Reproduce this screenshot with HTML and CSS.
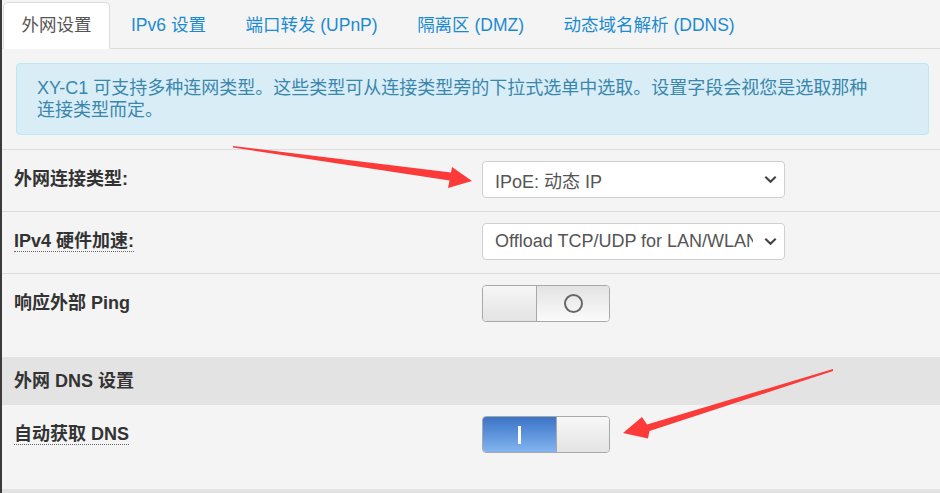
FILE: index.html
```html
<!DOCTYPE html>
<html lang="zh-CN">
<head>
<meta charset="utf-8">
<title>外网设置</title>
<link rel="stylesheet" href="styles.css">
</head>
<body>
<div class="page">
  <ul class="tabs">
    <li class="tab active">外网设置</li>
    <li class="tab">IPv6 设置</li>
    <li class="tab">端口转发 (UPnP)</li>
    <li class="tab">隔离区 (DMZ)</li>
    <li class="tab">动态域名解析 (DDNS)</li>
  </ul>

  <div class="alert">XY-C1 可支持多种连网类型。这些类型可从连接类型旁的下拉式选单中选取。设置字段会视您是选取那种<br>连接类型而定。</div>

  <div class="form">
    <div class="row">
      <div class="label"><span>外网连接类型:</span></div>
      <div class="select">
        <span class="select-text">IPoE: 动态 IP</span>
        <svg class="chev" width="13" height="9" viewBox="0 0 13 9"><path d="M1.3 1.8 L6.5 6.8 L11.7 1.8" fill="none" stroke="#444" stroke-width="2.2"/></svg>
      </div>
    </div>
    <div class="row">
      <div class="label"><span class="dotted">IPv4 硬件加速:</span></div>
      <div class="select">
        <span class="select-text">Offload TCP/UDP for LAN/WLAN</span>
        <svg class="chev" width="13" height="9" viewBox="0 0 13 9"><path d="M1.3 1.8 L6.5 6.8 L11.7 1.8" fill="none" stroke="#444" stroke-width="2.2"/></svg>
      </div>
    </div>
    <div class="row tall">
      <div class="label"><span>响应外部 Ping</span></div>
      <div class="toggle">
        <div class="knob knob-left"></div>
        <div class="track-off"><div class="circle"></div></div>
      </div>
    </div>
    <div class="section">外网 DNS 设置</div>
    <div class="row tall last nobar">
      <div class="label"><span class="dotted">自动获取 DNS</span></div>
      <div class="toggle">
        <div class="track-on"><div class="bar"></div></div>
        <div class="knob knob-right"></div>
      </div>
    </div>
    <div class="section thin"></div>
  </div>

  <svg class="arrows" width="940" height="493" viewBox="0 0 940 493">
    <polygon points="233,146 451,172.5 452,167 472,181 448,188 449.5,180.5 233,147.5" fill="#fc3a3a"/>
    <polygon points="833,369 647,424.5 642,417 623,433 648,438.5 649.5,431 833,371" fill="#fc3a3a"/>
  </svg>
</div>
</body>
</html>
```

FILE: styles.css
```css
* { box-sizing: border-box; }

html, body {
  margin: 0;
  padding: 0;
  height: 493px;
  overflow: hidden;
  background: #f4f4f4;
}

body {
  font-family: "Liberation Sans", "Noto Sans CJK SC", sans-serif;
  font-size: 18px;
  color: #333;
}

.page {
  position: relative;
  height: 493px;
  border-left: 2px solid #3b3b3b;
}

.tabs {
  list-style: none;
  margin: 0;
  padding: 2px 0 0 1px;
  display: flex;
  height: 49px;
  border-bottom: 1px solid #dcdcdc;
  font-size: 17.5px;
}

.tab {
  height: 47px;
  line-height: 45px;
  padding: 0 17.5px;
  margin-right: 2.5px;
  color: #1b8bd0;
  border: 1px solid transparent;
  border-radius: 5px 5px 0 0;
  white-space: nowrap;
}

.tab.active {
  background: #fff;
  color: #555;
  border-color: #dcdcdc;
  border-bottom-color: #fff;
}

.alert {
  margin: 14px 11px 0 14px;
  padding: 13px 20px;
  background: #d9edf7;
  border: 1px solid #bce8f1;
  border-radius: 4px;
  color: #3a87ad;
  line-height: 22px;
  white-space: nowrap;
}

.form {
  margin-top: 14px;
}

.row {
  display: grid;
  grid-template-columns: 468px 303px;
  align-items: start;
  padding: 11px 0 13px 12px;
  border-top: 1px solid #dcdcdc;
  background: #f4f4f4;
}

.row.tall { padding-bottom: 35px; }
.row.last { padding-bottom: 36px; }
.row.nobar { border-top: none; }

.label {
  line-height: 37px;
  font-weight: bold;
  color: #333;
}

.dotted {
  border-bottom: 1px dotted #666;
}

.select {
  height: 37px;
  background: #fff;
  border: 1px solid #cfcfcf;
  border-radius: 4px;
  display: flex;
  align-items: center;
  padding: 0 7px 0 12px;
  color: #555;
  overflow: hidden;
}

.select-text {
  flex: 1;
  white-space: nowrap;
  overflow: hidden;
  margin-right: 11px;
}

.chev { flex: none; }

.toggle {
  width: 128px;
  height: 37px;
  display: flex;
  border: 1px solid #a8a8a8;
  border-radius: 4px;
  overflow: hidden;
}

.knob {
  width: 54px;
  background: linear-gradient(#f7f7f7, #e3e3e3);
}

.knob-left {
  border-right: 1px solid #a8a8a8;
  box-shadow: 1px 0 1px rgba(0,0,0,0.08);
}

.knob-right {
  border-left: 1px solid #a8a8a8;
}

.track-off {
  flex: 1;
  display: flex;
  align-items: center;
  justify-content: center;
  background: linear-gradient(#e3e3e3, #fbfbfb);
}

.circle {
  width: 19px;
  height: 19px;
  border: 2.5px solid #686868;
  border-radius: 50%;
}

.track-on {
  width: 74px;
  display: flex;
  align-items: center;
  justify-content: center;
  background: linear-gradient(#3b73c6, #82b5f0);
}

.bar {
  width: 3px;
  height: 18px;
  background: #fff;
}

.section {
  height: 48px;
  line-height: 48px;
  padding-left: 12px;
  background: #e3e3e3;
  font-weight: bold;
  color: #333;
}

.section.thin { height: 10px; }

.arrows {
  position: absolute;
  left: -2px;
  top: 0;
  pointer-events: none;
}
```
